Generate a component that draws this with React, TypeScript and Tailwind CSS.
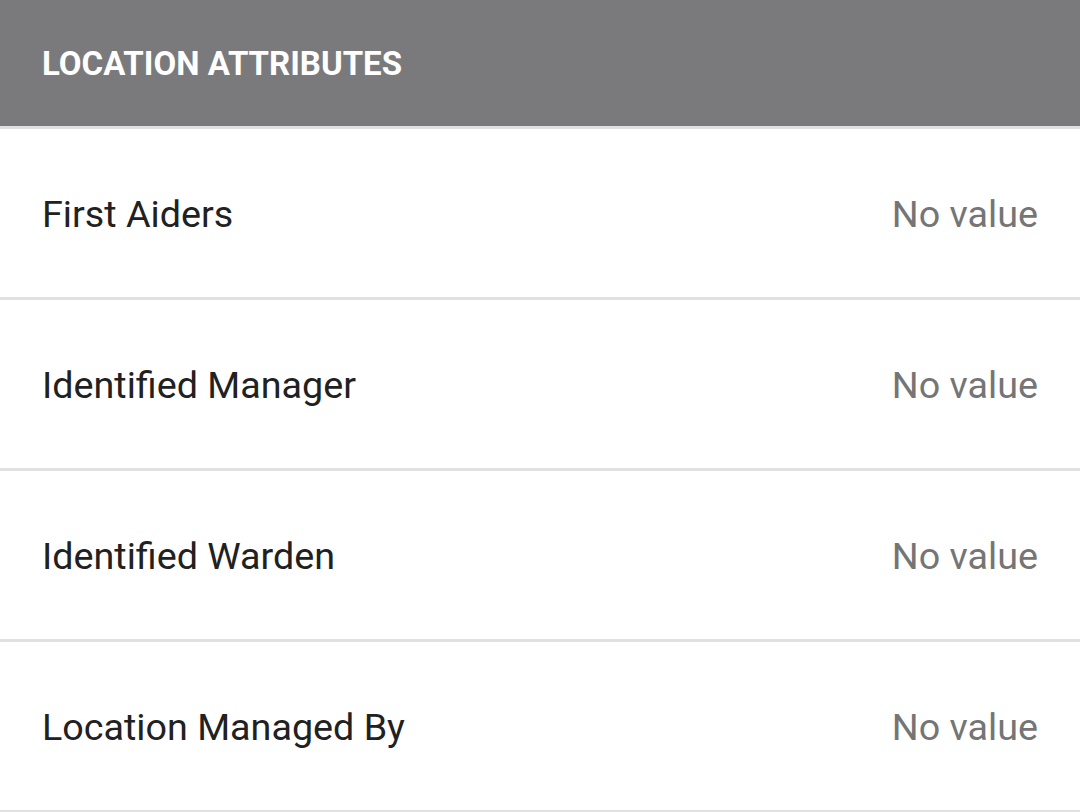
import React from "react";

const rows = ["First Aiders", "Identified Manager", "Identified Warden", "Location Managed By"];

export default function App() {
  return (
    <div className="w-[1080px] h-[812px] overflow-hidden bg-white" style={{ fontFamily: "Roboto, 'Noto Sans', sans-serif" }}>
      <div className="h-[129px] bg-[#7a7a7c] flex items-center px-[42px] border-b-[3px] border-[#e0e0e0] box-border">
        <span className="text-white font-bold text-[33px] leading-none">LOCATION ATTRIBUTES</span>
      </div>
      {rows.map((r) => (
        <div key={r} className="h-[171px] box-border flex items-center justify-between px-[42px] pt-[4px] border-b-[3px] border-[#e0e0e0]">
          <span className="text-[#212121] text-[37.7px] leading-none">{r}</span>
          <span className="text-[#757575] text-[37.7px] leading-none">No value</span>
        </div>
      ))}
    </div>
  );
}
